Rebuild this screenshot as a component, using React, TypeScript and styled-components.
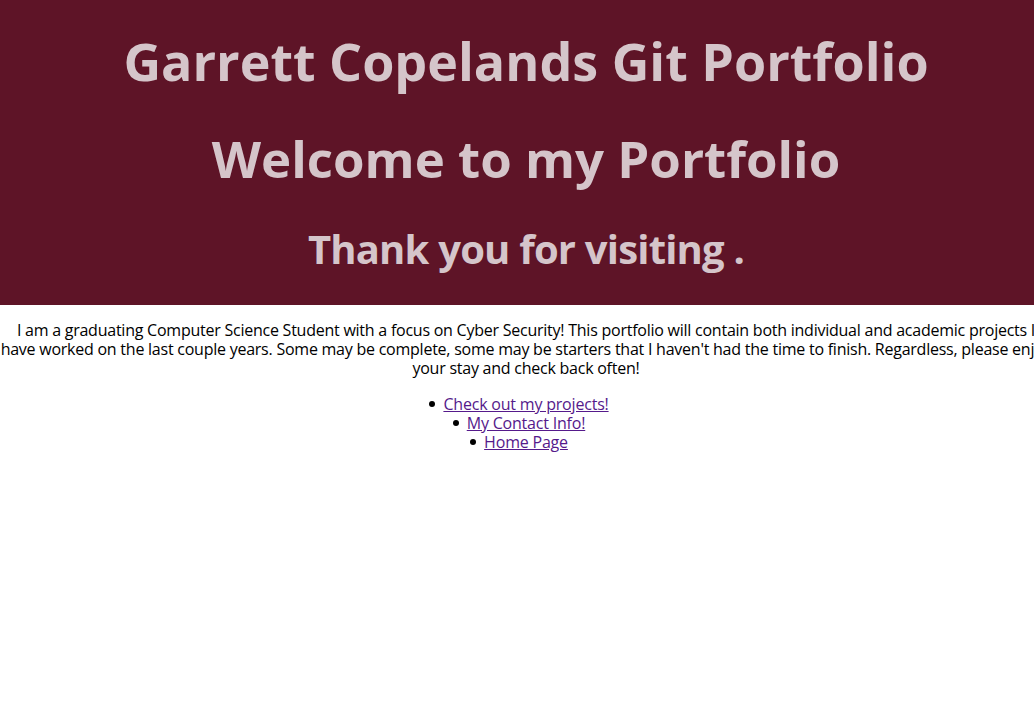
import React from "react";
import styled, { createGlobalStyle } from "styled-components";

const Global = createGlobalStyle`
  html, body { margin: 0; padding: 0; background: #ffffff; }
  body { overflow: hidden; font-family: "Open Sans", "Noto Sans", sans-serif; }
`;

const Page = styled.div`
  width: 1052px;
`;

const Header = styled.header`
  background: #5e1427;
  color: #d5c5ca;
  display: flex;
  flex-direction: column;
  align-items: center;
  padding: 16px 0 18px;
`;

const Heading = styled.h1<{ $size: number; $lh: number; $ls?: number }>`
  margin: 0;
  font-family: "Open Sans", "Noto Sans", sans-serif;
  font-weight: 700;
  font-size: ${(p) => p.$size}px;
  line-height: ${(p) => p.$lh}px;
  letter-spacing: ${(p) => p.$ls ?? 0}px;
  white-space: nowrap;
  text-align: center;
`;

const Main = styled.main`
  text-align: center;
  font-family: "Open Sans", "Noto Sans", sans-serif;
  font-size: 16px;
  line-height: 19px;
  color: #000;
`;

const Intro = styled.p`
  margin: 16px 0 17px;
  letter-spacing: -0.24px;
`;

const LinkList = styled.ul`
  margin: 0;
  padding: 0 14px 0 0;
  list-style: none;
  letter-spacing: -0.2px;
`;

const Item = styled.li`
  &::before {
    content: "";
    display: inline-block;
    width: 6px;
    height: 6px;
    border-radius: 50%;
    background: #000;
    margin-right: 8px;
    vertical-align: 3px;
  }
`;

const Link = styled.a`
  color: #551a8b;
  text-decoration: underline;
`;

export default function App() {
  return (
    <Page>
      <Global />
      <Header>
        <Heading $size={52} $lh={90}>Garrett Copelands Git Portfolio</Heading>
        <Heading $size={51} $lh={105}>Welcome to my Portfolio</Heading>
        <Heading $size={40} $lh={76} $ls={-0.8}>Thank you for visiting .</Heading>
      </Header>
      <Main>
        <Intro>
          I am a graduating Computer Science Student with a focus on Cyber Security! This portfolio will
          contain both individual and academic projects I have worked on the last couple years. Some may be
          complete, some may be starters that I haven't had the time to finish. Regardless, please enjoy
          your stay and check back often!
        </Intro>
        <LinkList>
          <Item>
            <Link href="#projects">Check out my projects!</Link>
          </Item>
          <Item>
            <Link href="#contact">My Contact Info!</Link>
          </Item>
          <Item>
            <Link href="#home">Home Page</Link>
          </Item>
        </LinkList>
      </Main>
    </Page>
  );
}
